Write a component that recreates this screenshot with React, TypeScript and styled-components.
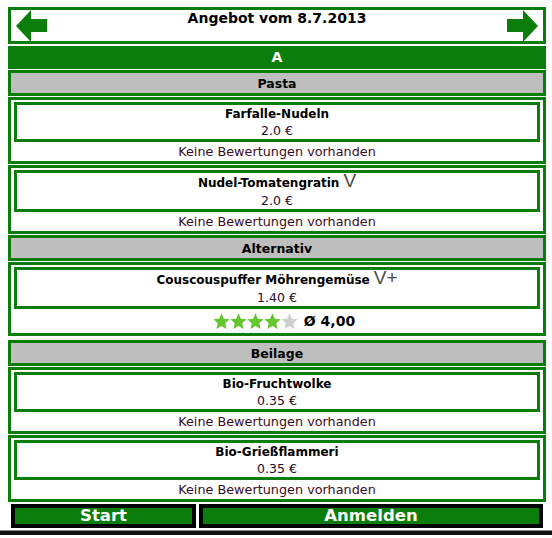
import React from 'react';
import styled, { createGlobalStyle } from 'styled-components';

const GREEN = '#0a7d0a';

const GlobalStyle = createGlobalStyle`
  body {
    margin: 0;
    background: #fff;
    font-family: "DejaVu Sans", Verdana, sans-serif;
  }
`;

const Page = styled.div`
  padding: 7px 6px 0 8px;
`;

const Header = styled.header`
  display: flex;
  align-items: flex-start;
  height: 31px;
  border: 3px solid ${GREEN};
  background: #fff;
`;

const ArrowSvg = styled.svg`
  flex: none;
  display: block;
  margin: 0 5px;
`;

const Title = styled.h1`
  flex: 1;
  margin: 0;
  font-size: 14px;
  font-weight: bold;
  line-height: 17px;
  text-align: center;
  color: #000;
`;

const LineBar = styled.div`
  margin-top: 2px;
  height: 23px;
  line-height: 23px;
  background: ${GREEN};
  color: #fff;
  font-size: 14px;
  font-weight: bold;
  text-align: center;
`;

const Category = styled.div<{ $gap?: number }>`
  margin-top: ${(p) => p.$gap ?? 1}px;
  height: 20px;
  line-height: 21px;
  border: 3px solid ${GREEN};
  background: #bebebe;
  font-size: 12.5px;
  font-weight: bold;
  text-align: center;
  color: #000;
`;

const Card = styled.div`
  margin-top: 1px;
  border: 3px solid ${GREEN};
  padding: 2px 3px 0;
`;

const Dish = styled.div`
  border: 3px solid ${GREEN};
  text-align: center;
`;

const Name = styled.div<{ $tall?: boolean }>`
  height: ${(p) => (p.$tall ? 20 : 18)}px;
  font-size: 12px;
  font-weight: bold;
  line-height: ${(p) => (p.$tall ? 20 : 18)}px;
  color: #000;
`;

const Mark = styled.span`
  font-family: "Liberation Sans", Arial, sans-serif;
  font-weight: normal;
  font-size: 19px;
  line-height: 12px;
  color: #4a4a4a;
  margin-left: 4px;
`;

const Price = styled.div`
  height: 16px;
  font-size: 12.5px;
  line-height: 16px;
  color: #1e0a28;
`;

const Rating = styled.div`
  height: 19px;
  line-height: 19px;
  font-size: 12.8px;
  text-align: center;
  color: #3a0c1c;
`;

const Stars = styled.div`
  display: flex;
  justify-content: center;
  align-items: center;
  height: 24px;
  padding-left: 14px;
`;

const Average = styled.span`
  margin-left: 6px;
  font-size: 14px;
  font-weight: bold;
  color: #000;
`;

const Buttons = styled.div`
  display: grid;
  grid-template-columns: 185px 1fr;
  gap: 3px;
  margin-top: 2px;
  padding: 0 3px;
`;

const Button = styled.button`
  height: 24px;
  margin: 0;
  padding: 0;
  border: 4px solid #000;
  background: ${GREEN};
  color: #fff;
  font-family: "DejaVu Sans", Verdana, sans-serif;
  font-size: 16.5px;
  font-weight: bold;
  line-height: 16px;
  cursor: pointer;
`;

const Footer = styled.div`
  margin-top: 2px;
  height: 4px;
  border-top: 1px solid #8a8a8a;
  background: #111;
`;

const Arrow = ({ dir }: { dir: 'left' | 'right' }) => (
  <ArrowSvg width={31} height={32} viewBox="0 0 31 32">
    <polygon
      fill={GREEN}
      points={
        dir === 'left'
          ? '0,16 15,0 15,9 31,9 31,22 15,22 15,32'
          : '31,16 16,0 16,9 0,9 0,22 16,22 16,32'
      }
    />
  </ArrowSvg>
);

const Star = ({ on }: { on: boolean }) => (
  <svg width={17} height={17} viewBox="0 0 24 24">
    <polygon
      fill={on ? '#66c630' : '#cfcfcf'}
      points="12,0.5 15.3,8 23.5,8.8 17.3,14.3 19.1,22.5 12,18.3 4.9,22.5 6.7,14.3 0.5,8.8 8.7,8"
    />
  </svg>
);

type Meal = {
  name: string;
  price: string;
  mark?: string;
  score?: number;
};

const groups: { title: string; meals: Meal[] }[] = [
  {
    title: 'Pasta',
    meals: [
      { name: 'Farfalle-Nudeln', price: '2.0 €' },
      { name: 'Nudel-Tomatengratin', price: '2.0 €', mark: 'V' },
    ],
  },
  {
    title: 'Alternativ',
    meals: [
      { name: 'Couscouspuffer Möhrengemüse', price: '1.40 €', mark: 'V+', score: 4 },
    ],
  },
  {
    title: 'Beilage',
    meals: [
      { name: 'Bio-Fruchtwolke', price: '0.35 €' },
      { name: 'Bio-Grießflammeri', price: '0.35 €' },
    ],
  },
];

const MealCard = ({ meal }: { meal: Meal }) => (
  <Card>
    <Dish>
      <Name $tall={!!meal.mark}>
        {meal.name}
        {meal.mark && <Mark>{meal.mark}</Mark>}
      </Name>
      <Price>{meal.price}</Price>
    </Dish>
    {meal.score ? (
      <Stars>
        {[1, 2, 3, 4, 5].map((i) => (
          <Star key={i} on={i <= meal.score!} />
        ))}
        <Average>Ø {meal.score.toFixed(2).replace('.', ',')}</Average>
      </Stars>
    ) : (
      <Rating>Keine Bewertungen vorhanden</Rating>
    )}
  </Card>
);

export default function App() {
  return (
    <>
      <GlobalStyle />
      <Page>
        <Header>
          <Arrow dir="left" />
          <Title>Angebot vom 8.7.2013</Title>
          <Arrow dir="right" />
        </Header>
        <LineBar>A</LineBar>
        {groups.map((g, gi) => (
          <React.Fragment key={g.title}>
            <Category $gap={gi === 2 ? 4 : 1}>{g.title}</Category>
            {g.meals.map((m) => (
              <MealCard key={m.name} meal={m} />
            ))}
          </React.Fragment>
        ))}
        <Buttons>
          <Button>Start</Button>
          <Button>Anmelden</Button>
        </Buttons>
      </Page>
      <Footer />
    </>
  );
}
